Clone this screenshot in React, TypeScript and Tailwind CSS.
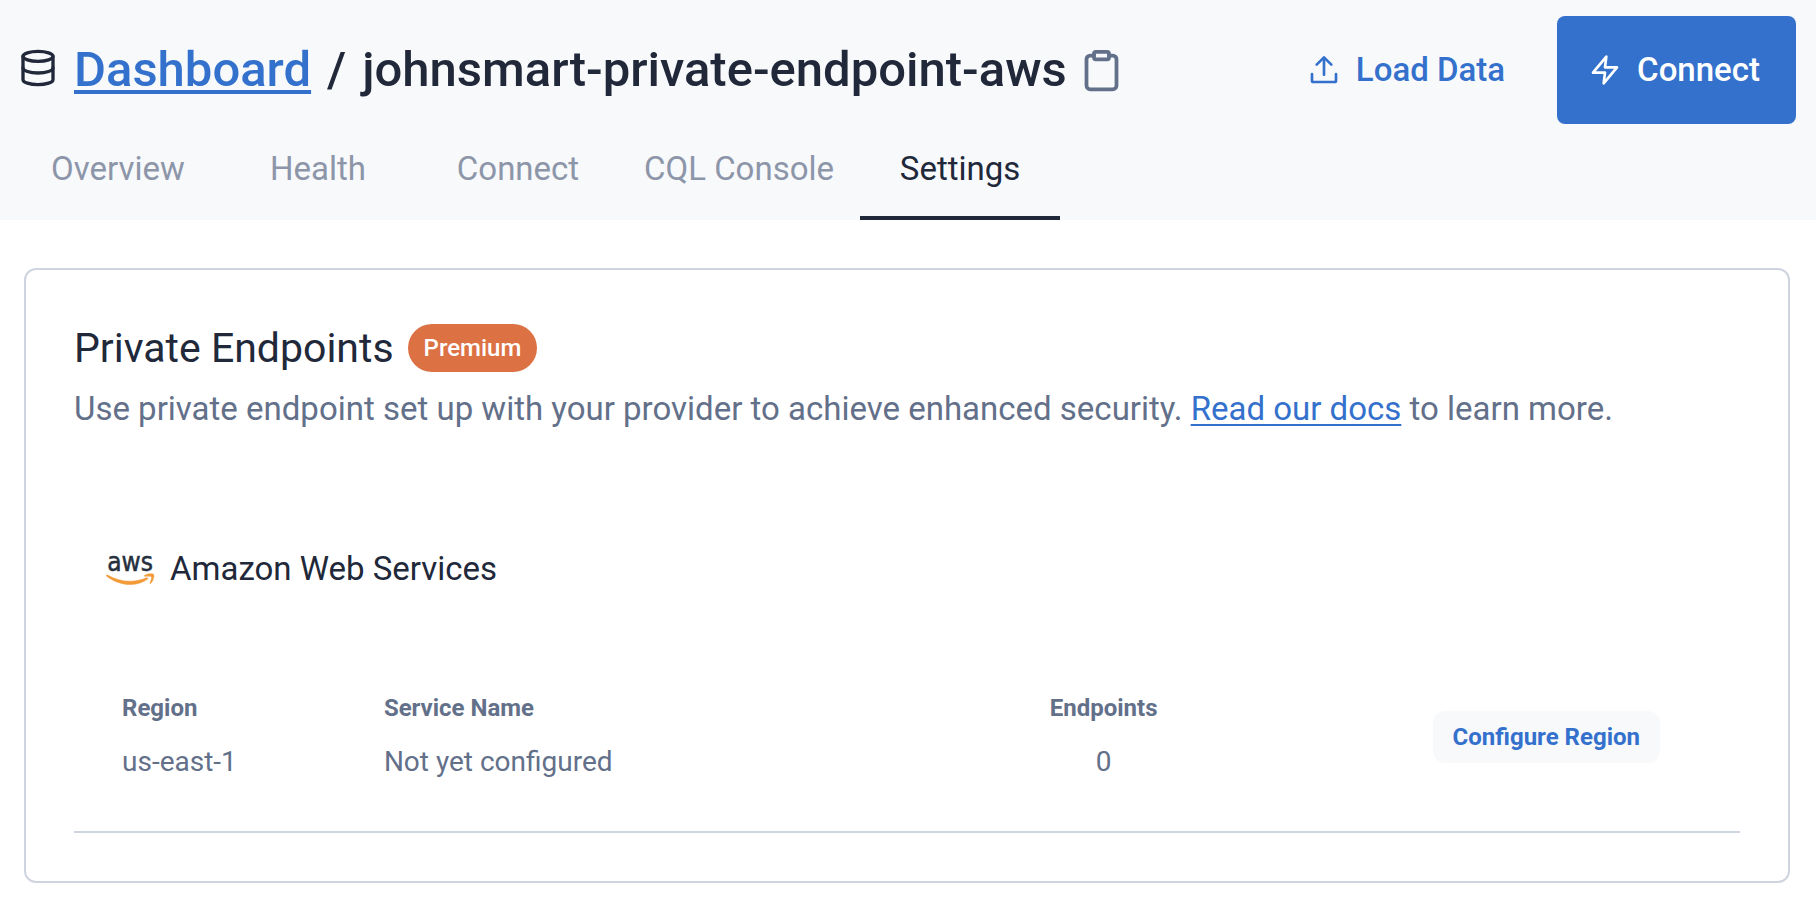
import React from "react";

const tabs = ["Overview", "Health", "Connect", "CQL Console", "Settings"];

type IconProps = { className: string; strokeWidth?: number; children: React.ReactNode };

function Icon({ className, strokeWidth = 2, children }: IconProps) {
  return (
    <svg
      viewBox="0 0 24 24"
      className={className}
      fill="none"
      stroke="currentColor"
      strokeWidth={strokeWidth}
      strokeLinecap="round"
      strokeLinejoin="round"
      aria-hidden="true"
    >
      {children}
    </svg>
  );
}

function AwsLogo() {
  return (
    <svg viewBox="0 0 48 32" className="h-8 w-12 shrink-0 overflow-visible" role="img" aria-label="aws">
      <text
        x="24"
        y="18"
        textAnchor="middle"
        fontFamily="'DejaVu Sans Condensed', 'Noto Sans', sans-serif"
        fontSize="26"
        fill="#252f3e"
        stroke="#252f3e"
        strokeWidth="0.5"
      >
        aws
      </text>
      <g fill="#f29a38" stroke="#f29a38" strokeWidth="0.5" transform="translate(0 2)">
        <path d="M0.400 20.600c0.500-0.800 1.200-0.700 2-0.200C9 24.200 16.500 26.200 24.200 26.200c5.300 0 11-1.100 16.400-3.400 1.100-0.500 1.900 0.700 0.800 1.500C36.800 27.600 30.200 29.600 24.200 29.600 15.500 29.600 7.300 26.200 1 21.500c-0.500-0.400-0.900-0.600-0.600-0.900z" />
        <path d="M38.500 20.400c2.300-1.700 8.200-2.100 9.200-0.900 0.900 1.200-0.500 6.800-3 9-0.500 0.400-0.900 0.200-0.700-0.400 0.800-1.900 1.900-5.600 1.400-6.400-0.500-0.700-4.200-0.600-6.300-0.400-0.800 0.100-1.200-0.500-0.600-0.900z" />
      </g>
    </svg>
  );
}

export default function App() {
  return (
    <div className="min-h-screen bg-white pb-7 font-['Roboto',sans-serif] text-[#21283a]">
      <header className="bg-[#f7f9fb] pt-4">
        <div className="flex items-center justify-between gap-8 pr-5 pl-[18px]">
          <h1 className="flex items-center text-[49px] leading-[72px] font-medium">
            <Icon className="mr-4 mb-1 size-10 shrink-0">
              <ellipse cx="12" cy="5" rx="9" ry="3" />
              <path d="M3 5v14a9 3 0 0 0 18 0V5" />
              <path d="M3 12a9 3 0 0 0 18 0" />
            </Icon>
            <a href="#dashboard" className="text-[#3471cd] underline decoration-4 underline-offset-4">
              Dashboard
            </a>
            <span className="mx-4">/</span>
            <span>johnsmart-private-endpoint-aws</span>
            <button type="button" aria-label="Copy name" className="ml-3 text-[#63708a]">
              <Icon className="size-[45px]">
                <path d="M16 4h2a2 2 0 0 1 2 2v14a2 2 0 0 1-2 2H6a2 2 0 0 1-2-2V6a2 2 0 0 1 2-2h2" />
                <rect x="8" y="2" width="8" height="4" rx="1" />
              </Icon>
            </button>
          </h1>
          <div className="flex items-center gap-5 text-[33px] font-medium">
            <button type="button" className="flex h-[108px] items-center gap-4 px-8 text-[#3471cd]">
              <Icon className="size-8">
                <path d="M21 15v5a1 1 0 0 1-1 1H4a1 1 0 0 1-1-1v-5" />
                <path d="M17.500 8L12 2.500 6.500 8" />
                <path d="M12 3v12.500" />
              </Icon>
              Load Data
            </button>
            <button type="button" className="flex h-[108px] items-center gap-4 rounded-lg bg-[#3471cd] pr-9 pl-8 text-white">
              <Icon className="size-8">
                <path d="M13 2L3 14h9l-1 8 10-12h-9l1-8z" />
              </Icon>
              Connect
            </button>
          </div>
        </div>
        <nav className="flex pl-[18px] text-[33px] text-[#8d96a9]">
          {tabs.map((tab) => (
            <a
              key={tab}
              href="#"
              aria-current={tab === "Settings" ? "page" : undefined}
              className="flex h-24 min-w-[200px] items-center justify-center border-b-4 border-transparent px-[26px] pb-0.5 aria-[current=page]:border-[#21283a] aria-[current=page]:text-[#21283a]"
            >
              {tab}
            </a>
          ))}
        </nav>
      </header>

      <main className="mt-12 mr-[26px] ml-6 rounded-xl border-2 border-[#cfd4e1] p-12 text-[#63708a]">
        <div className="flex items-center gap-3.5 pt-1.5">
          <h2 className="text-[41px] leading-12 text-[#21283a]">Private Endpoints</h2>
          <span className="rounded-full bg-[#dc7144] px-4 text-2xl leading-12 font-medium text-white">Premium</span>
        </div>
        <p className="mt-3 text-[33px] leading-[50px]">
          Use private endpoint set up with your provider to achieve enhanced security.{" "}
          <a href="#docs" className="text-[#3471cd] underline decoration-2 underline-offset-4">
            Read our docs
          </a>{" "}
          to learn more.
        </p>
        <h3 className="mt-[110px] flex items-center gap-4 pl-8 text-[33px] leading-[50px] text-[#21283a]">
          <AwsLogo />
          Amazon Web Services
        </h3>
        <table className="mt-22 w-full table-fixed border-b-2 border-[#cfd4e1] text-left">
          <colgroup>
            <col className="w-[18.6%]" />
            <col className="w-[33.4%]" />
            <col className="w-[19.6%]" />
            <col />
          </colgroup>
          <tbody>
            <tr className="h-13 text-2xl">
              <th scope="col" className="pl-12">Region</th>
              <th scope="col">Service Name</th>
              <th scope="col" className="text-center">Endpoints</th>
              <td rowSpan={2} className="pr-20 pb-[68px] text-right align-bottom">
                <button type="button" className="ml-auto block h-[52px] rounded-xl bg-[#f7f9fb] px-5 text-2xl font-bold text-[#3471cd]">
                  Configure Region
                </button>
              </td>
            </tr>
            <tr className="h-[98px] align-top text-[28px] leading-14">
              <td className="pl-12">us-east-1</td>
              <td>Not yet configured</td>
              <td className="text-center">0</td>
            </tr>
          </tbody>
        </table>
      </main>
    </div>
  );
}
